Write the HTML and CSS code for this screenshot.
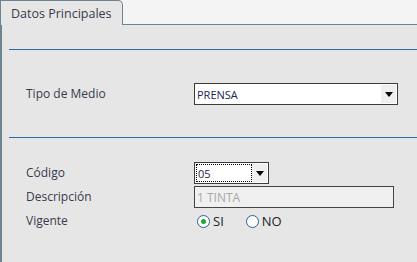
FILE: index.html
```html
<!DOCTYPE html>
<html lang="es">
<head>
  <meta charset="UTF-8" />
  <title>Datos Principales</title>
  <link rel="stylesheet" href="styles.css">
</head>
<body>
  <div class="tabs">
    <div class="tab">Datos Principales</div>
    <div class="tab-fill"></div>
  </div>

  <div class="panel">
    <hr class="sep">

    <div class="row row-medio">
      <label for="medio">Tipo de Medio</label>
      <div class="combo combo-wide">
        <select id="medio">
          <option>PRENSA</option>
        </select>
        <span class="arrow"><svg width="8" height="5" viewBox="0 0 8 5"><path d="M0 0h8L4 5z" fill="#000"/></svg></span>
      </div>
    </div>

    <hr class="sep sep-second">

    <div class="row">
      <label for="codigo">Código</label>
      <div class="combo combo-short">
        <select id="codigo" class="focused">
          <option>05</option>
        </select>
        <span class="arrow"><svg width="8" height="5" viewBox="0 0 8 5"><path d="M0 0h8L4 5z" fill="#000"/></svg></span>
      </div>
    </div>

    <div class="row">
      <label for="desc">Descripción</label>
      <input id="desc" class="text-input" type="text" value="1 TINTA" disabled>
    </div>

    <div class="row">
      <label>Vigente</label>
      <div class="radios">
        <label class="radio"><input type="radio" name="vigente" checked> SI</label>
        <label class="radio"><input type="radio" name="vigente"> NO</label>
      </div>
    </div>
  </div>
</body>
</html>
```

FILE: styles.css
```css
* {
  margin: 0;
  padding: 0;
  box-sizing: border-box;
}

body {
  background: #f4f4f4;
  font-family: 'Open Sans', 'DejaVu Sans', sans-serif;
  font-size: 12px;
  color: #3a3a4e;
  height: 262px;
  display: flex;
  flex-direction: column;
}

.tabs {
  display: flex;
  height: 25px;
}

.tab {
  width: 123px;
  height: 25px;
  background: #e6e6e6;
  border: 1px solid #6e8591;
  border-bottom: none;
  border-top-right-radius: 5px;
  padding-left: 10px;
  line-height: 25px;
  font-size: 12.5px;
}

.tab-fill {
  flex: 1;
  border-bottom: 1px solid #6e8591;
}

.panel {
  flex: 1;
  background: #e6e6e6;
  border-left: 2px solid #6e8591;
  padding-top: 24px;
}

.sep {
  border: none;
  border-top: 1px solid #2d6ca4;
  margin-left: 7px;
}

.row-medio {
  margin-top: 33px;
}

.sep-second {
  margin-top: 32px;
  margin-bottom: 24px;
}

.row {
  display: flex;
  align-items: center;
  height: 22px;
  margin-bottom: 2px;
}

.row > label {
  width: 192px;
  padding-left: 24px;
  padding-bottom: 2px;
}

.combo {
  display: flex;
  height: 22px;
  border: 1px solid #3c3c3c;
  background: #fff;
  padding: 1px;
}

.combo-wide {
  width: 204px;
}

.combo-short {
  width: 75px;
}

.combo select {
  flex: 1;
  appearance: none;
  border: none;
  background: #fff;
  font-family: 'Open Sans', sans-serif;
  font-size: 11px;
  color: #1c2450;
  padding-left: 1px;
  outline: none;
}

.combo select.focused {
  border: 1px dotted #000;
}

.arrow {
  width: 15px;
  background: #efefef;
  display: flex;
  align-items: center;
  justify-content: center;
}

.text-input {
  width: 200px;
  height: 22px;
  border: 1px solid #444;
  background: #f0f0f0;
  font-family: 'Open Sans', sans-serif;
  font-size: 12px;
  color: #a8a8a8;
  padding-left: 2px;
}

.radios {
  display: flex;
  gap: 22px;
  padding-left: 3px;
}

.radio {
  display: flex;
  align-items: center;
  gap: 3px;
  font-size: 13px;
  color: #222;
}

.radio input {
  appearance: none;
  width: 13px;
  height: 13px;
  border: 1px solid #2d5f8f;
  border-radius: 50%;
  background: #fff;
  display: flex;
  align-items: center;
  justify-content: center;
}

.radio input:checked::after {
  content: '';
  width: 5px;
  height: 5px;
  border-radius: 50%;
  background: #1faa2a;
}
```
